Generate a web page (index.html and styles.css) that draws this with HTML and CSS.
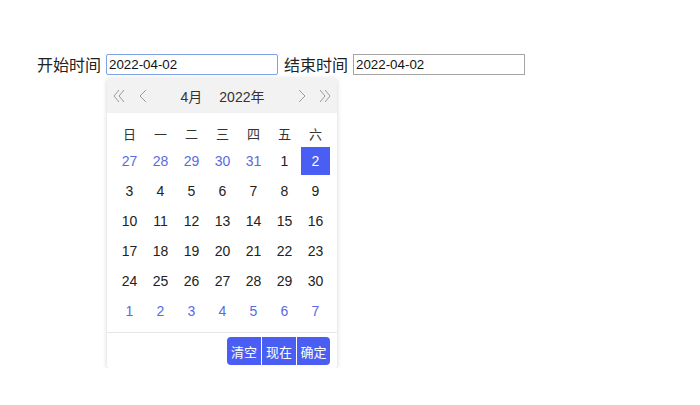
FILE: index.html
```html
<!DOCTYPE html>
<html lang="zh-CN">
<head>
  <meta charset="UTF-8" />
  <title>日期选择</title>
  <link rel="stylesheet" href="styles.css">
</head>
<body>

<div class="range-row">
  <label class="range-label">开始时间</label>
  <input class="date-input focused" type="text" value="2022-04-02">
  <label class="range-label end">结束时间</label>
  <input class="date-input" type="text" value="2022-04-02">
</div>

<div class="calendar">
  <div class="cal-header">
    <span class="cal-nav">
      <svg width="12" height="14" viewBox="0 0 12 14"><path d="M6 1 L1 7 L6 13 M11 1 L6 7 L11 13" fill="none" stroke="#9a9a9a" stroke-width="1"/></svg>
    </span>
    <span class="cal-nav prev">
      <svg width="8" height="14" viewBox="0 0 8 14"><path d="M7 1 L1 7 L7 13" fill="none" stroke="#9a9a9a" stroke-width="1"/></svg>
    </span>
    <span class="cal-title"><span>4月</span><span>2022年</span></span>
    <span class="cal-nav next">
      <svg width="8" height="14" viewBox="0 0 8 14"><path d="M1 1 L7 7 L1 13" fill="none" stroke="#9a9a9a" stroke-width="1"/></svg>
    </span>
    <span class="cal-nav">
      <svg width="12" height="14" viewBox="0 0 12 14"><path d="M1 1 L6 7 L1 13 M6 1 L11 7 L6 13" fill="none" stroke="#9a9a9a" stroke-width="1"/></svg>
    </span>
  </div>

  <div class="cal-body">
    <div class="cal-weekdays">
      <span>日</span><span>一</span><span>二</span><span>三</span><span>四</span><span>五</span><span>六</span>
    </div>
    <div class="cal-days" id="calDays"></div>
  </div>

  <div class="cal-footer">
    <div class="btn-group">
      <button class="cal-btn">清空</button>
      <button class="cal-btn">现在</button>
      <button class="cal-btn">确定</button>
    </div>
  </div>
</div>

<script>
  const calDays = document.getElementById("calDays");
  const days = [];
  [27, 28, 29, 30, 31].forEach(d => days.push({ d, other: true }));
  for (let d = 1; d <= 30; d++) days.push({ d, other: false, selected: d === 2 });
  for (let d = 1; d <= 7; d++) days.push({ d, other: true });

  days.forEach(item => {
    const span = document.createElement("span");
    span.className = "cal-day";
    if (item.other) span.classList.add("other");
    if (item.selected) span.classList.add("selected");
    span.textContent = item.d;
    calDays.appendChild(span);
  });
</script>

</body>
</html>
```

FILE: styles.css
```css
* {
  box-sizing: border-box;
  margin: 0;
  padding: 0;
}

body {
  margin: 8px;
  font-family: "Liberation Sans", "Noto Sans CJK SC", sans-serif;
  color: #222;
  background: #fff;
}

.range-row {
  display: flex;
  align-items: center;
  margin-top: 46px;
  padding-left: 29px;
}

.range-label {
  font-size: 16px;
  font-family: "Noto Sans CJK SC", sans-serif;
  color: #222;
  margin-right: 5px;
  line-height: 21px;
}

.range-label.end {
  margin-left: 6px;
}

.date-input {
  width: 172px;
  height: 21px;
  border: 1px solid #a5a5a5;
  padding: 0 2px;
  font-size: 13.33px;
  font-family: "Liberation Sans", sans-serif;
  color: #111;
  background: #fff;
  outline: none;
}

.date-input.focused {
  border-color: #7ea0e4;
  border-radius: 2px;
}

.calendar {
  width: 230px;
  margin: 3px 0 0 99px;
  background: #fff;
  border-radius: 3px;
  box-shadow: 0 1px 5px rgba(0, 0, 0, 0.18);
}

.cal-header {
  display: flex;
  align-items: center;
  height: 35px;
  padding: 0 5px;
  background: #f2f2f2;
  border-radius: 3px 3px 0 0;
}

.cal-nav {
  display: flex;
  align-items: center;
  justify-content: center;
  width: 14px;
  height: 20px;
}

.cal-nav.prev {
  margin-left: 10px;
}

.cal-nav.next {
  margin-right: 9px;
}

.cal-title {
  flex: 1;
  display: flex;
  justify-content: center;
  gap: 17px;
  font-size: 14px;
  color: #333;
}

.cal-body {
  padding: 6px 7px 7px 8px;
}

.cal-weekdays,
.cal-days {
  display: grid;
  grid-template-columns: repeat(7, 29px);
  column-gap: 2px;
}

.cal-weekdays span {
  height: 28px;
  line-height: 30px;
  text-align: center;
  font-size: 13px;
  font-family: "Noto Sans CJK SC", sans-serif;
  color: #333;
}

.cal-days {
  row-gap: 2px;
}

.cal-day {
  height: 28px;
  line-height: 28px;
  text-align: center;
  font-size: 14px;
  color: #222;
}

.cal-day.other {
  color: #5a6ae2;
}

.cal-day.selected {
  background: #4b5ef4;
  color: #fff;
}

.cal-footer {
  display: flex;
  justify-content: flex-end;
  border-top: 1px solid #e6e6e6;
  padding: 4px 7px 3px 0;
}

.btn-group {
  display: flex;
  gap: 1px;
}

.cal-btn {
  width: 34px;
  height: 28px;
  border: none;
  background: #4b5ef4;
  color: #fff;
  font-size: 13px;
  font-family: "Noto Sans CJK SC", sans-serif;
}

.cal-btn:first-child {
  border-radius: 4px 0 0 4px;
}

.cal-btn:last-child {
  width: 33px;
  border-radius: 0 4px 4px 0;
}
```
